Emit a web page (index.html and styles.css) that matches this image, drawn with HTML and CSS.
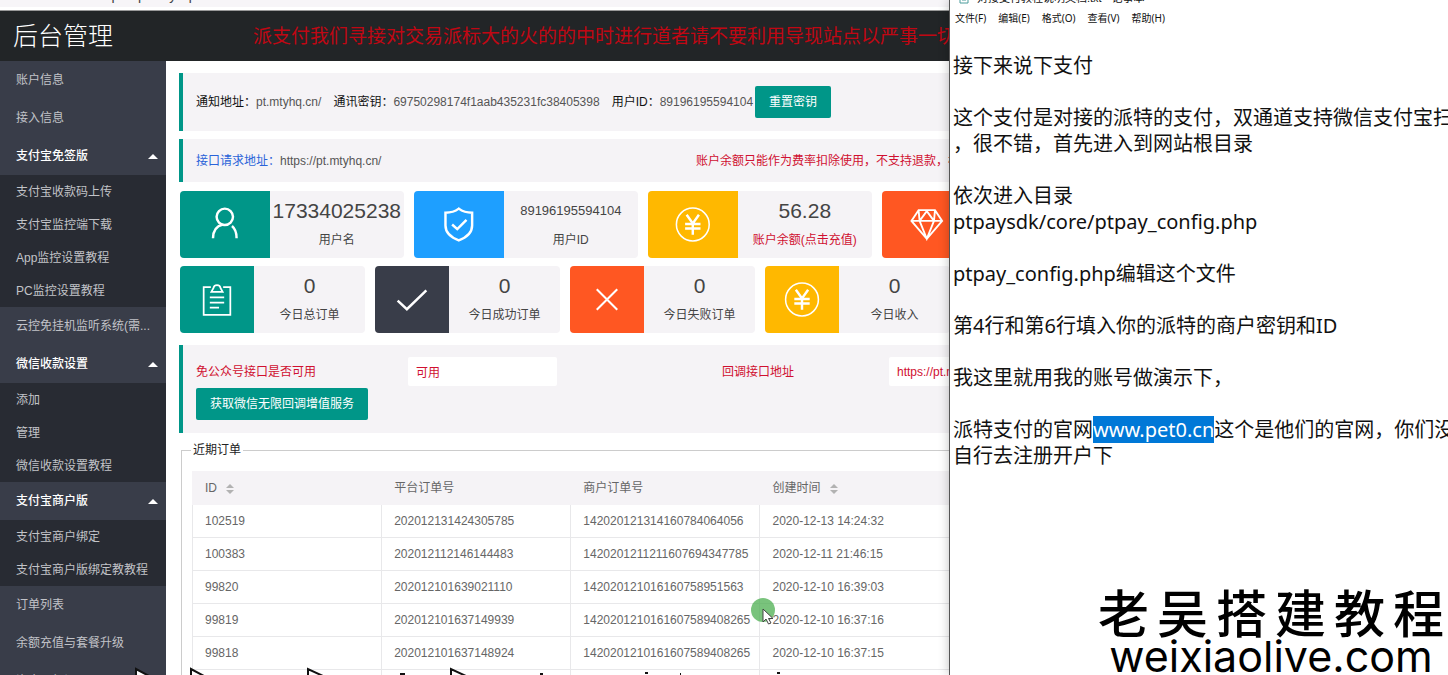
FILE: index.html
```html
<!DOCTYPE html>
<html lang="zh-CN">
<head>
<meta charset="utf-8">
<title>后台管理</title>
<link rel="stylesheet" href="styles.css">
</head>
<body>
<svg class="defs" aria-hidden="true">
  <symbol id="i-user" viewBox="0 0 40 40"><circle cx="20" cy="12.500" r="8"/><path d="M8.500 33.500C8.500 26 12 21.500 18 20M27 21.500C30 24 31.500 28 31.500 33.500"/></symbol>
  <symbol id="i-shield" viewBox="0 0 40 40"><path d="M20 4.500C16 7.500 12 8.500 7 8.500V21C7 28 12 32.500 20 35.500C28 32.500 33 28 33 21V8.500C28 8.500 24 7.500 20 4.500ZM13.500 20L18.500 24.500L27.500 15.500"/></symbol>
  <symbol id="i-yen" viewBox="0 0 40 40"><circle cx="20" cy="20" r="16" stroke-width="1.500"/><path d="M14 10.500L20 19L26 10.500M20 19V30M12.500 19.500H27.500M12.500 24H27.500"/></symbol>
  <symbol id="i-gem" viewBox="0 0 40 40"><path stroke-width="1.800" d="M12 6H28L35 16.500L20 34L5 16.500ZM5 16.500H35M12 6L13 16.500L20 34L27 16.500L28 6M13 16.500L20 7L27 16.500"/></symbol>
  <symbol id="i-list" viewBox="0 0 40 40"><path stroke-width="1.700" d="M14 8H7V35H33V8H26M14.500 12.500H25.500L23.500 9C23 5 17 5 16.500 9ZM13 18H27M13 23H27M13 28H22"/></symbol>
  <symbol id="i-check" viewBox="0 0 40 40"><path d="M6 21L15 29.500L34 11"/></symbol>
  <symbol id="i-cross" viewBox="0 0 40 40"><path stroke-width="2" d="M10 10L30 30M30 10L10 30"/></symbol>
</svg>
<div class="desktop">
  <div class="browser">
    <div class="toolbar"><span>https://pt.mtyhq.cn/</span></div>
    <header class="top">
      <h1>后台管理</h1>
      <p class="notice">派支付我们寻接对交易派标大的火的的中时进行道者请不要利用导现站点以严事一切准备</p>
    </header>
    <div class="body">
      <nav class="side">
        <a href="#">账户信息</a>
        <a href="#">接入信息</a>
        <a href="#" class="open">支付宝免签版</a>
        <div class="sub">
          <a href="#">支付宝收款码上传</a>
          <a href="#">支付宝监控端下载</a>
          <a href="#">App监控设置教程</a>
          <a href="#">PC监控设置教程</a>
        </div>
        <a href="#">云控免挂机监听系统(需...</a>
        <a href="#" class="open">微信收款设置</a>
        <div class="sub">
          <a href="#">添加</a>
          <a href="#">管理</a>
          <a href="#">微信收款设置教程</a>
        </div>
        <a href="#" class="open">支付宝商户版</a>
        <div class="sub">
          <a href="#">支付宝商户绑定</a>
          <a href="#">支付宝商户版绑定教教程</a>
        </div>
        <a href="#">订单列表</a>
        <a href="#">余额充值与套餐升级</a>
        <a href="#">资金明细记录</a>
      </nav>
      <main class="main">
        <section class="quote keys">
          <span>通知地址：<em>pt.mtyhq.cn/</em></span>
          <span>通讯密钥：<em>69750298174f1aab435231fc38405398</em></span>
          <span>用户ID：<em>89196195594104</em></span>
          <button type="button" class="btn">重置密钥</button>
        </section>
        <section class="quote api">
          <p><a href="#">接口请求地址：</a><em>https://pt.mtyhq.cn/</em></p>
          <p class="warn">账户余额只能作为费率扣除使用，不支持退款，根据使用</p>
        </section>
        <section class="cards five">
          <article class="card green"><svg><use href="#i-user"/></svg><div><strong>17334025238</strong><span>用户名</span></div></article>
          <article class="card blue"><svg><use href="#i-shield"/></svg><div><strong class="small">89196195594104</strong><span>用户ID</span></div></article>
          <article class="card yellow"><svg><use href="#i-yen"/></svg><div><strong>56.28</strong><a href="#">账户余额(点击充值)</a></div></article>
          <article class="card red"><svg><use href="#i-gem"/></svg><div></div></article>
        </section>
        <section class="cards six">
          <article class="card green"><svg><use href="#i-list"/></svg><div><strong>0</strong><span>今日总订单</span></div></article>
          <article class="card dark"><svg><use href="#i-check"/></svg><div><strong>0</strong><span>今日成功订单</span></div></article>
          <article class="card red"><svg><use href="#i-cross"/></svg><div><strong>0</strong><span>今日失败订单</span></div></article>
          <article class="card yellow"><svg><use href="#i-yen"/></svg><div><strong>0</strong><span>今日收入</span></div></article>
        </section>
        <section class="quote wechat">
          <div class="fields">
            <label for="state">免公众号接口是否可用</label>
            <input id="state" value="可用">
            <label for="callback">回调接口地址</label>
            <input id="callback" value="https://pt.mtyhq.cn/">
          </div>
          <button type="button" class="btn">获取微信无限回调增值服务</button>
        </section>
        <fieldset class="orders">
          <legend>近期订单</legend>
          <table>
            <thead><tr><th>ID <i class="sort"></i></th><th>平台订单号</th><th>商户订单号</th><th>创建时间 <i class="sort"></i></th><th></th><th></th></tr></thead>
            <tbody>
              <tr><td>102519</td><td>202012131424305785</td><td>142020121314160784064056</td><td>2020-12-13 14:24:32</td><td></td><td></td></tr>
              <tr><td>100383</td><td>202012112146144483</td><td>1420201211211607694347785</td><td>2020-12-11 21:46:15</td><td></td><td></td></tr>
              <tr><td>99820</td><td>202012101639021110</td><td>142020121016160758951563</td><td>2020-12-10 16:39:03</td><td></td><td></td></tr>
              <tr><td>99819</td><td>202012101637149939</td><td>1420201210161607589408265</td><td>2020-12-10 16:37:16</td><td></td><td></td></tr>
              <tr><td>99818</td><td>202012101637148924</td><td>1420201210161607589408265</td><td>2020-12-10 16:37:15</td><td></td><td></td></tr>
              <tr><td></td><td></td><td></td><td></td><td></td><td></td></tr>
            </tbody>
          </table>
        </fieldset>
      </main>
    </div>
  </div>
  <div class="notepad">
    <div class="title"><svg viewBox="0 0 10 12"><path d="M1 1H9V11H1ZM3 4H7M3 6H7M3 8H7"/></svg><span>对接支付教程说明文档.txt - 记事本</span></div>
    <nav class="menu"><a href="#">文件(F)</a><a href="#">编辑(E)</a><a href="#">格式(O)</a><a href="#">查看(V)</a><a href="#">帮助(H)</a></nav>
    <div class="text">接下来说下支付

这个支付是对接的派特的支付，双通道支持微信支付宝扫
，很不错，首先进入到网站根目录

依次进入目录
ptpaysdk/core/ptpay_config.php

ptpay_config.php编辑这个文件

第4行和第6行填入你的派特的商户密钥和ID

我这里就用我的账号做演示下，

派特支付的官网<mark>www.pet0.cn</mark>这个是他们的官网，你们没
自行去注册开户下</div>
  </div>
  <svg class="pointer" viewBox="0 0 28 30"><circle cx="13" cy="13" r="12"/><path d="M13 12V25L16 22L18.500 27L21 26L18.500 21.500H23Z"/></svg>
  <svg class="caption" viewBox="0 0 700 10"><path d="M16 12V4L29 11M71 12V4L84 11M188 12V4L203 11M331 12V4L346 11M280 9H285M420 9H423M525 8H528M560 9H561M657 8H660"/></svg>
  <div class="brand"><p>老吴搭建教程</p><p class="url">weixiaolive.com</p></div>
</div>
</body>
</html>
```
FILE: styles.css
```css
* { box-sizing: border-box; }
body { margin: 0; font: 12px/18px "Liberation Sans", "Noto Sans CJK SC", sans-serif; color: #444; }
h1, p { margin: 0; font-weight: 400; }
a { color: inherit; text-decoration: none; }
em { font-style: normal; color: #555; }
.defs { display: none; }
.desktop { position: relative; display: flex; height: 100vh; overflow: hidden; background: #fff; }

.browser { flex: 1; min-width: 0; overflow: hidden; display: flex; flex-direction: column; }
.toolbar { height: 11px; flex: none; overflow: hidden; padding-left: 96px; background: #f7f5f8; border-bottom: 1px solid #999; box-shadow: inset 0 -3px #fff; }
.toolbar span { display: block; margin-top: -14px; font-size: 14px; }
.top { height: 50px; flex: none; display: flex; align-items: center; background: #222527; white-space: nowrap; overflow: hidden; }
.top h1 { width: 253px; flex: none; padding-left: 13px; font-size: 25px; line-height: 50px; font-weight: 300; color: #fff; }
.notice { padding-top: 2px; font-size: 19px; line-height: 50px; color: #c00713; }
.body { flex: 1; min-height: 0; display: flex; }

.side { width: 166px; flex: none; overflow: hidden; background: #393d49; color: #c2c3c8; }
.side a { display: flex; align-items: center; justify-content: space-between; height: 38px; padding: 0 8px 0 16px; white-space: nowrap; }
.side .open { color: #fff; font-weight: 500; }
.open::after { content: ""; border: 5px solid transparent; border-top: 0; border-bottom-color: #fff; }
.sub { background: #282b33; }
.side .sub a { height: 33px; }

.main { flex: none; width: 1188px; padding: 12px 14px; }
.quote { border-left: 4px solid #009688; background: #f5f3f6; margin-left: -1px; padding-left: 13px; }
.keys { display: flex; align-items: center; gap: 12px; height: 58px; color: #111; }
.keys .btn { margin-left: -10px; }
.btn { height: 32px; padding: 0 14px; border: 0; border-radius: 2px; background: #009688; color: #fff; font: inherit; }
.api { display: flex; align-items: center; height: 43px; margin-top: 8px; }
.api p:first-child { width: 500px; }
.api a { color: #2a63d9; }
.api .warn { color: #d01030; }

.cards { display: grid; column-gap: 10px; margin-top: 8px; }
.five { grid-template-columns: repeat(5, 1fr); margin-top: 9px; }
.six { grid-template-columns: repeat(6, 1fr); }
.card { display: flex; height: 67px; border-radius: 4px; overflow: hidden; background: #f5f3f6; }
.card svg { width: 40%; height: 67px; flex: none; padding: 13px 0; fill: none; stroke: #fff; stroke-width: 2.4; }
.card div { flex: 1; text-align: center; padding-top: 8px; white-space: nowrap; }
.card strong { display: block; font-weight: 400; font-size: 21px; line-height: 24px; }
.card .small { font-size: 13px; }
.card span, .card a { display: block; line-height: 18px; margin-top: 8px; }
.card a { color: #d01030; }
.green svg { background: #009688; }
.blue svg { background: #1e9fff; }
.yellow svg { background: #ffb800; }
.red svg { background: #ff5722; }
.dark svg { background: #393d49; }

.wechat { height: 88px; margin-top: 12px; padding-top: 12px; }
.fields { display: flex; align-items: center; color: #d01030; }
.fields label { width: 212px; }
.fields label:nth-of-type(2) { width: 167px; margin-left: 165px; }
.fields input { width: 149px; height: 29px; border: 0; border-radius: 2px; padding: 0 8px; background: #fff; color: inherit; font: inherit; }
.wechat .btn { margin-top: 2px; }

.orders { margin: 8px 0 0 1px; padding: 12px 10px; border: 1px solid #ccc; border-right: 0; }
.orders legend { padding: 0 2px; margin-left: -1px; color: #222; }
.orders table { border-collapse: collapse; table-layout: fixed; width: 1136px; color: #666; }
.orders th, .orders td { width: 189px; height: 33px; padding: 0 12px; border: 1px solid #e8e8ea; text-align: left; font-weight: 400; }
.orders th { background: #f5f3f6; border-color: #f5f3f6; }
.sort { display: inline-grid; gap: 2px; margin-left: 6px; vertical-align: middle; }
.sort::before, .sort::after { content: ""; border: 4px solid transparent; }
.sort::before { border-top: 0; border-bottom-color: #b2b2b2; }
.sort::after { border-bottom: 0; border-top-color: #b2b2b2; }

.notepad { width: 499px; flex: none; overflow: hidden; border-left: 1px solid #555; background: #fff; color: #111; box-shadow: 0 0 10px rgba(0, 0, 0, .25); position: relative; }
.title { display: flex; gap: 8px; height: 7px; padding-left: 9px; font-size: 11px; line-height: 14px; align-items: flex-end; overflow: hidden; }
.title svg { width: 10px; height: 12px; margin-bottom: 3px; fill: none; stroke: #4a9c9c; }
.title span { margin-bottom: 2px; }
.menu { display: flex; gap: 12px; padding-left: 5px; font: 10px/22px "Noto Sans", "Noto Sans CJK SC", sans-serif; }
.text { margin-top: 24px; padding-left: 3px; white-space: pre; font: 20px/26px "Noto Sans", "Noto Sans CJK SC", sans-serif; }
.text mark { background: #0078d7; color: #fff; }

.pointer { position: absolute; left: 750px; top: 597px; width: 28px; height: 30px; }
.pointer circle { fill: #4caf50; opacity: .75; }
.pointer path { fill: #fff; stroke: #444; stroke-width: 1; }
.caption { position: absolute; left: 120px; bottom: 0; width: 700px; height: 10px; fill: #fff; stroke: #111; stroke-width: 2; }
.brand { position: absolute; right: 4px; bottom: 0; width: 346px; color: #000; }
.brand p { font: 500 51px/52px "Noto Sans CJK SC", sans-serif; text-align-last: justify; }
.brand .url { font: 43px/38px Inter, sans-serif; text-align-last: center; }
```
